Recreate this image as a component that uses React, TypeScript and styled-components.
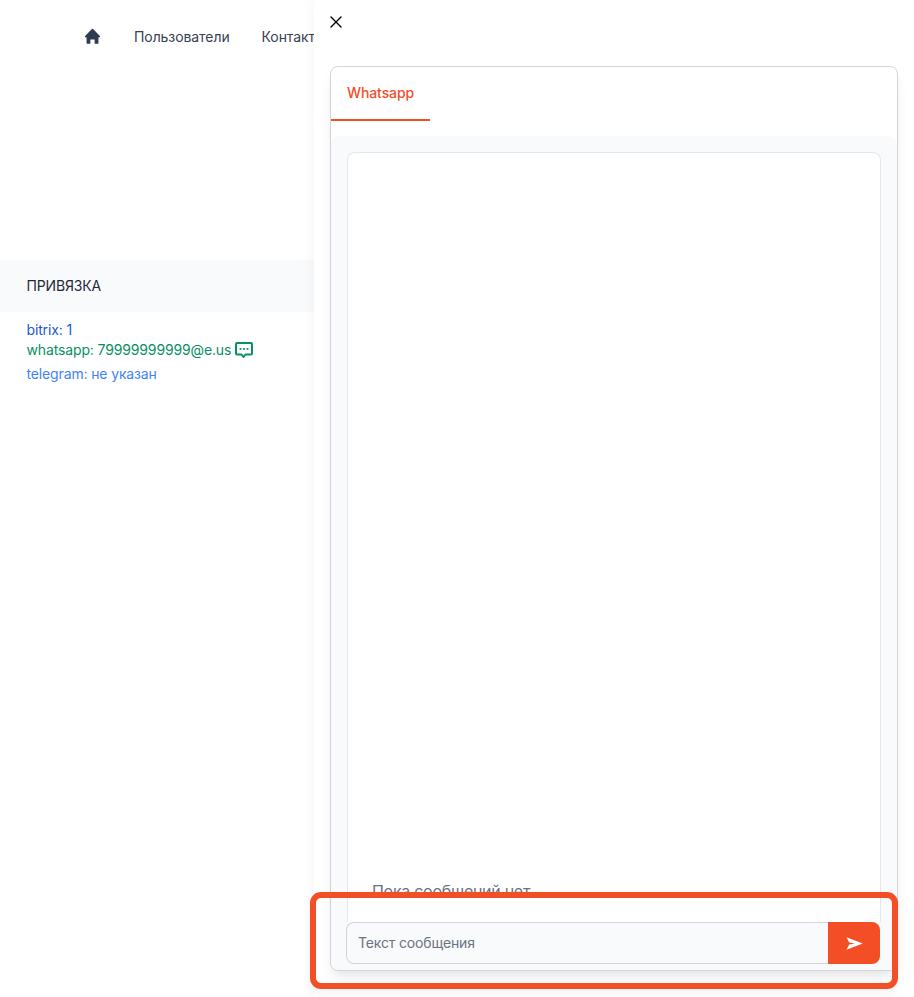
import * as React from 'react';
import styled, { createGlobalStyle } from 'styled-components';

const GlobalStyle = createGlobalStyle`
  html, body {
    margin: 0;
    padding: 0;
    height: 100%;
    background: #fff;
    font-family: Inter, "Noto Sans", sans-serif;
    overflow: hidden;
  }
`;

const Page = styled.div`
  width: 914px;
  height: 997px;
  position: relative;
  overflow: hidden;
`;

const Nav = styled.nav`
  display: flex;
  align-items: center;
  gap: 32px;
  height: 72px;
  padding-left: 84px;
  box-sizing: border-box;
  font-size: 14px;
  font-weight: 400;
  letter-spacing: -0.08px;
  color: #374151;
  white-space: nowrap;
  svg {
    display: block;
    margin-right: 1px;
  }
`;

const SectionHead = styled.div`
  margin-top: 188px;
  height: 52px;
  padding: 0 0 1px 26.5px;
  box-sizing: border-box;
  display: flex;
  align-items: center;
  background: #f9fafb;
  font-size: 14px;
  font-weight: 400;
  letter-spacing: -0.15px;
  color: #1f2937;
`;

const Bindings = styled.div`
  padding: 8px 0 0 26.5px;
  font-size: 14px;
  line-height: 20px;
  letter-spacing: -0.14px;
`;

const Binding = styled.div<{ $color: string; $gap?: number }>`
  display: flex;
  align-items: center;
  gap: 4px;
  color: ${(p) => p.$color};
  margin-top: ${(p) => p.$gap ?? 0}px;
`;

const Drawer = styled.aside`
  position: absolute;
  top: 0;
  right: 0;
  width: 600px;
  height: 997px;
  box-sizing: border-box;
  padding: 14px 16px 26px;
  background: #fff;
  box-shadow: -4px 0 12px rgba(17, 24, 39, 0.03);
  display: flex;
  flex-direction: column;
`;

const CloseButton = styled.button`
  align-self: flex-start;
  width: 16px;
  height: 16px;
  padding: 0;
  margin-left: -2px;
  border: 0;
  background: none;
  color: #000;
  svg {
    display: block;
  }
`;

const Card = styled.section`
  margin-top: 36px;
  flex: 1;
  min-height: 0;
  border: 1px solid #d1d5db;
  border-radius: 8px;
  background: #fff;
  box-shadow: 0 10px 15px -3px rgba(0, 0, 0, 0.08), 0 4px 6px -2px rgba(0, 0, 0, 0.04);
  display: flex;
  flex-direction: column;
`;

const TabBar = styled.div`
  height: 54px;
  display: flex;
  margin-bottom: 15px;
`;

const Tab = styled.div`
  width: 99px;
  box-sizing: border-box;
  padding: 0 0 2px 16px;
  display: flex;
  align-items: center;
  font-size: 14px;
  font-weight: 500;
  letter-spacing: -0.1px;
  color: #f34e25;
  border-bottom: 2px solid #f34e25;
`;

const TabPanel = styled.div`
  flex: 1;
  min-height: 0;
  background: #f9fafb;
  border-radius: 8px;
  padding: 16px 16px 6px;
  display: flex;
  flex-direction: column;
`;

const Messages = styled.div`
  flex: 1;
  min-height: 0;
  border: 1px solid #e5e7eb;
  border-bottom: 0;
  border-radius: 8px 8px 0 0;
  background: #fff;
  overflow: hidden;
`;

const Feed = styled.div`
  height: 745px;
  overflow: hidden;
  display: flex;
  align-items: flex-end;
  padding-left: 24px;
  font-size: 16px;
  line-height: 24px;
  letter-spacing: -0.28px;
  color: #6b7280;
`;

const EmptyText = styled.p`
  margin: 0 0 -5px;
`;

const Composer = styled.form`
  display: flex;
  height: 42px;
  margin: 0 1px 0 -1px;
  flex: none;
`;

const MessageInput = styled.input`
  flex: 1;
  min-width: 0;
  box-sizing: border-box;
  border: 1px solid #d1d5db;
  border-right: 0;
  border-radius: 8px 0 0 8px;
  background: #f9fafb;
  padding: 0 11px 2px;
  font-family: inherit;
  font-size: 14px;
  letter-spacing: -0.14px;
  &::placeholder {
    color: #6b7280;
    opacity: 1;
  }
`;

const SendButton = styled.button`
  width: 52px;
  border: 0;
  padding: 0;
  border-radius: 0 8px 8px 0;
  background: #f34e25;
  color: #fff;
  display: flex;
  align-items: center;
  justify-content: center;
`;

const Highlight = styled.div`
  position: absolute;
  left: 310px;
  top: 892px;
  width: 588px;
  height: 97px;
  box-sizing: border-box;
  border: 6px solid #f34e25;
  border-radius: 11px;
  box-shadow: 0 6px 10px rgba(0, 0, 0, 0.04);
  pointer-events: none;
`;

const HomeIcon = () => (
  <svg width="17" height="17" viewBox="0 0 20 20" fill="#2f3b4e">
    <path d="M10.7 1.3a1 1 0 0 0-1.4 0l-8 8A1 1 0 0 0 2 11h1v6.5a1 1 0 0 0 1 1h3.5v-5h5v5H16a1 1 0 0 0 1-1V11h1a1 1 0 0 0 .7-1.7l-8-8z" />
  </svg>
);

const CloseIcon = () => (
  <svg width="16" height="16" viewBox="0 0 16 16" fill="none" stroke="currentColor" strokeWidth="1.4" strokeLinecap="round">
    <path d="M3 3l10 10M13 3L3 13" />
  </svg>
);

const ChatIcon = () => (
  <svg width="18" height="16" viewBox="0 0 18 16" fill="none">
    <path d="M2 1h14a1 1 0 0 1 1 1v9.5a1 1 0 0 1-1 1h-5.5L8.5 15l-2-2.5H2a1 1 0 0 1-1-1V2a1 1 0 0 1 1-1z" stroke="#0a8f63" strokeWidth="2" />
    <rect x="4.6" y="6" width="1.8" height="1.8" fill="#0a8f63" />
    <rect x="8.1" y="6" width="1.8" height="1.8" fill="#0a8f63" />
    <rect x="11.6" y="6" width="1.8" height="1.8" fill="#0a8f63" />
  </svg>
);

const SendIcon = () => (
  <svg width="17" height="13" viewBox="0 0 17 13" fill="currentColor">
    <path d="M0.5 0.3L16.7 6.5 0.5 12.7 3.2 7.4 9 6.5 3.2 5.6z" />
  </svg>
);

const App = () => {
  return (
    <Page>
      <GlobalStyle />
      <Nav>
        <HomeIcon />
        <span>Пользователи</span>
        <span>Контакты</span>
      </Nav>
      <SectionHead>ПРИВЯЗКА</SectionHead>
      <Bindings>
        <Binding $color="#1a56db">bitrix: 1</Binding>
        <Binding $color="#0a8f63">
          whatsapp: 79999999999@e.us <ChatIcon />
        </Binding>
        <Binding $color="#3f83f8" $gap={4}>telegram: не указан</Binding>
      </Bindings>

      <Drawer>
        <CloseButton type="button"><CloseIcon /></CloseButton>
        <Card>
          <TabBar>
            <Tab>Whatsapp</Tab>
          </TabBar>
          <TabPanel>
            <Messages>
              <Feed>
                <EmptyText>Пока сообщений нет</EmptyText>
              </Feed>
            </Messages>
            <Composer>
              <MessageInput placeholder="Текст сообщения" />
              <SendButton type="button"><SendIcon /></SendButton>
            </Composer>
          </TabPanel>
        </Card>
      </Drawer>
      <Highlight />
    </Page>
  );
};

export default App;
